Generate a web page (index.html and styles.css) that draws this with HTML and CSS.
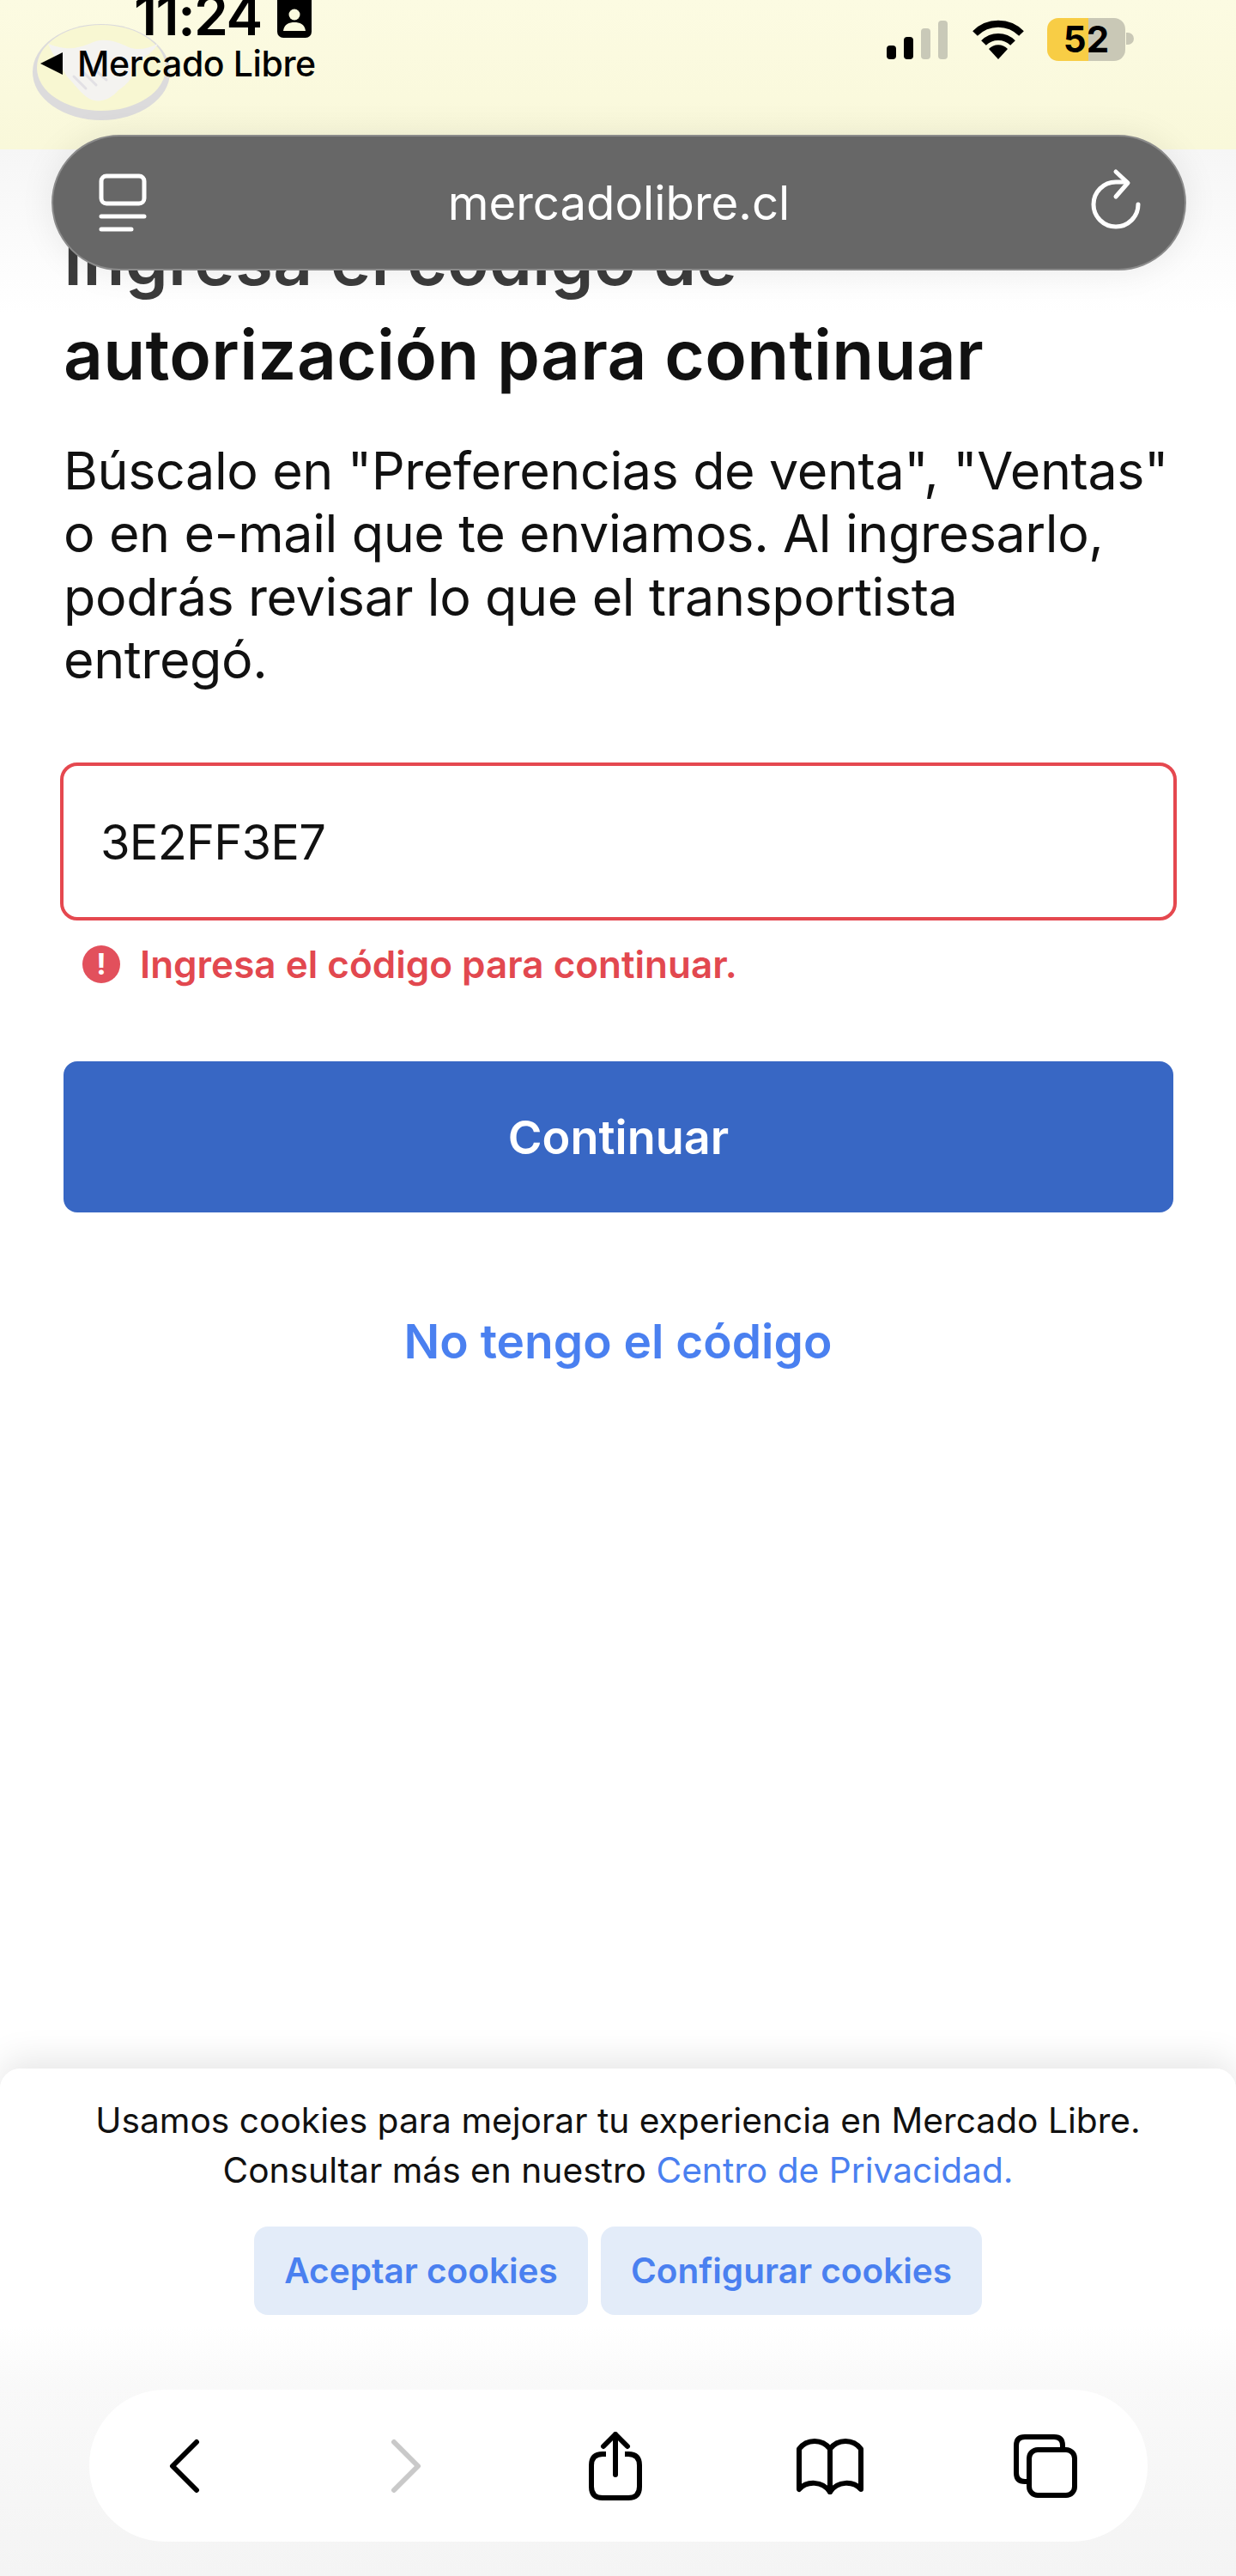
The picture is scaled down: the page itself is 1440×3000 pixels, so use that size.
FILE: index.html
```html
<!DOCTYPE html>
<html lang="es">
<head>
    <meta charset="UTF-8">
    <meta name="viewport" content="width=device-width, initial-scale=1.0">
    <title>Mercado Libre</title>
    <link rel="stylesheet" href="styles.css">
</head>
<body>

<div class="screen">

    <header class="top-band">
        <svg class="logo" width="160" height="113" viewBox="0 0 160 113">
            <ellipse cx="80" cy="57" rx="80" ry="56" fill="#dcdbdc"/>
            <ellipse cx="80" cy="52" rx="75" ry="50" fill="#f8f7d2"/>
            <path d="M18 24 C40 32 50 30 66 24 C80 16 96 20 112 28 C122 32 134 30 146 24 C138 38 124 42 120 48 C118 62 112 70 100 78 C92 88 78 94 66 88 C56 82 48 70 40 62 C34 52 24 38 18 24 Z" fill="#f4f3f0"/>
            <path d="M48 62 L62 76 M58 56 L74 72 M70 52 L86 66" stroke="#e2e0e4" stroke-width="3" stroke-linecap="round"/>
        </svg>
        <div class="status-left">
            <div class="clock">
                <span class="time">11:24</span>
                <svg width="40" height="44" viewBox="0 0 40 44">
                    <rect x="0" y="-8" width="40" height="52" rx="7" fill="#000"/>
                    <circle cx="20" cy="17" r="6.5" fill="#fbfadf"/>
                    <path d="M7 36 C8 28 14 26 20 26 C26 26 32 28 33 36 Z" fill="#fbfadf"/>
                </svg>
            </div>
            <div class="back-app">
                <span class="back-arrow"></span>
                <span>Mercado Libre</span>
            </div>
        </div>
        <div class="status-right">
            <div class="signal">
                <span class="bar bar-1"></span>
                <span class="bar bar-2"></span>
                <span class="bar bar-3 off"></span>
                <span class="bar bar-4 off"></span>
            </div>
            <svg class="wifi" width="62" height="46" viewBox="0 0 62 46">
                <path d="M4 16 A38 38 0 0 1 58 16" fill="none" stroke="#000" stroke-width="8"/>
                <path d="M14 27 A24 24 0 0 1 48 27" fill="none" stroke="#000" stroke-width="8"/>
                <path d="M20 34 A15 15 0 0 1 42 34 L31 46 Z" fill="#000"/>
            </svg>
            <div class="battery">
                <span class="battery-level">52</span>
            </div>
            <span class="battery-nub"></span>
        </div>
    </header>

    <div class="address-bar">
        <svg width="56" height="72" viewBox="0 0 56 72" fill="none" stroke="#fff" stroke-width="5" stroke-linecap="round">
            <rect x="3" y="5" width="50" height="32" rx="6"/>
            <path d="M3 52 H53 M3 67 H38"/>
        </svg>
        <span class="address-url">mercadolibre.cl</span>
        <svg width="58" height="70" viewBox="0 0 58 70" fill="none" stroke="#fff" stroke-width="5" stroke-linecap="round" stroke-linejoin="round">
            <path d="M55 37 A26 26 0 1 1 29 11 H41"/>
            <path d="M29 -1 L43 12 L29 28"/>
        </svg>
    </div>

    <main class="content">
        <h1 class="title"><span class="title-faded">Ingresa el código de</span><br>autorización para continuar</h1>
        <p class="lead">Búscalo en "Preferencias de venta", "Ventas"<br>o en e-mail que te enviamos. Al ingresarlo,<br>podrás revisar lo que el transportista<br>entregó.</p>

        <div class="code-input">3E2FF3E7</div>
        <div class="error-row">
            <span class="error-icon">!</span>
            <span>Ingresa el código para continuar.</span>
        </div>

        <button class="btn-primary">Continuar</button>
        <a class="link-secondary" href="#">No tengo el código</a>
    </main>

    <section class="cookie-card">
        <p class="cookie-text">Usamos cookies para mejorar tu experiencia en Mercado Libre.<br>Consultar más en nuestro <a href="#">Centro de Privacidad.</a></p>
        <div class="cookie-actions">
            <button class="btn-soft btn-accept">Aceptar cookies</button>
            <button class="btn-soft btn-config">Configurar cookies</button>
        </div>

        <nav class="toolbar">
            <div class="tool">
                <svg width="36" height="64" viewBox="0 0 36 64" fill="none" stroke="#000" stroke-width="6" stroke-linecap="round" stroke-linejoin="round">
                    <path d="M32 4 L4 32 L32 60"/>
                </svg>
            </div>
            <div class="tool tool-forward">
                <svg width="36" height="64" viewBox="0 0 36 64" fill="none" stroke="#c9c9c9" stroke-width="6" stroke-linecap="round" stroke-linejoin="round">
                    <path d="M4 4 L32 32 L4 60"/>
                </svg>
            </div>
            <div class="tool">
                <svg width="62" height="80" viewBox="0 0 62 80" fill="none" stroke="#000" stroke-width="6" stroke-linecap="round" stroke-linejoin="round">
                    <path d="M20 26 H16 Q3 26 3 39 V64 Q3 77 16 77 H46 Q59 77 59 64 V39 Q59 26 46 26 H42" stroke-linecap="butt"/>
                    <path d="M31 50 V3 M17 17 L31 3 L45 17"/>
                </svg>
            </div>
            <div class="tool">
                <svg width="78" height="66" viewBox="0 0 78 66" fill="none" stroke="#000" stroke-width="6" stroke-linecap="round" stroke-linejoin="round">
                    <path d="M3 60 V13 C12 1 30 1 39 13 C48 1 66 1 75 13 V60 C66 50 48 50 39 63 C30 50 12 50 3 60 Z"/>
                    <path d="M39 13 V63"/>
                </svg>
            </div>
            <div class="tool">
                <svg width="74" height="74" viewBox="0 0 74 74" fill="none" stroke="#000" stroke-width="6" stroke-linejoin="round">
                    <path d="M57 18 V13 Q57 3 47 3 H13 Q3 3 3 13 V45 Q3 55 13 55 H18"/>
                    <rect x="18" y="18" width="53" height="53" rx="10"/>
                </svg>
            </div>
        </nav>
    </section>

</div>

</body>
</html>
```

FILE: styles.css
```css
* {
    box-sizing: border-box;
}
html, body {
    margin: 0;
    padding: 0;
}
body {
    font-family: Inter, "Open Sans", sans-serif;
    background-color: #fff;
    color: #111;
}
.screen {
    position: relative;
    display: flex;
    flex-direction: column;
    height: 3000px;
    overflow: hidden;
}

/* status bar */
.top-band {
    position: relative;
    display: flex;
    justify-content: space-between;
    flex: 0 0 174px;
    background: linear-gradient(#fcfbe2, #f9f8da);
    color: #000;
}
.logo {
    position: absolute;
    left: 38px;
    top: 27px;
}
.status-left {
    position: relative;
    padding-left: 47px;
}
.clock {
    display: flex;
    align-items: flex-start;
    gap: 18px;
    padding-left: 109px;
    height: 44px;
}
.time {
    font-size: 64px;
    line-height: 64px;
    font-weight: 600;
    margin-top: -14px;
    letter-spacing: -1.5px;
}
.back-app {
    display: flex;
    align-items: center;
    gap: 17px;
    margin-top: 7px;
    font-size: 41px;
    line-height: 46px;
    font-weight: 500;
    letter-spacing: -0.4px;
}
.back-arrow {
    width: 0;
    height: 0;
    border-top: 13px solid transparent;
    border-bottom: 13px solid transparent;
    border-right: 26px solid #000;
}
.status-right {
    display: flex;
    align-items: flex-start;
    padding: 21px 119px 0 0;
}
.signal {
    display: flex;
    align-items: flex-end;
    gap: 9px;
    height: 48px;
    margin-right: 28px;
}
.bar {
    width: 11px;
    border-radius: 4px;
    background-color: #000;
}
.bar.off {
    background-color: #c9c9b8;
}
.bar-1 { height: 16px; }
.bar-2 { height: 26px; }
.bar-3 { height: 36px; }
.bar-4 { height: 45px; }
.wifi {
    margin: 2px 26px 0 0;
}
.battery {
    width: 91px;
    height: 50px;
    border-radius: 13px;
    background: linear-gradient(to right, #f8cd45 53%, #c9c8b6 53%);
}
.battery-level {
    display: block;
    text-align: center;
    font-size: 42px;
    line-height: 50px;
    font-weight: 700;
}
.battery-nub {
    width: 9px;
    height: 14px;
    margin: 17px 0 0 1px;
    border-radius: 0 7px 7px 0;
    background-color: #c9c8b6;
}

/* safari address bar, floats over the page */
.address-bar {
    position: absolute;
    left: 60px;
    top: 157px;
    z-index: 2;
    display: flex;
    align-items: center;
    justify-content: space-between;
    width: 1322px;
    height: 158px;
    padding: 0 51px 0 53px;
    border: 2px solid #8b8b8b;
    border-radius: 79px;
    background-color: #676767;
    box-shadow: 0 0 40px rgba(0, 0, 0, 0.08);
    color: #fff;
}
.address-bar svg {
    overflow: visible;
}
.address-url {
    font-size: 54.5px;
}

/* page */
.content {
    display: flex;
    flex-direction: column;
    flex: 1;
    padding: 74px 74px 0;
    background: linear-gradient(#f6f6f6, #fff 190px);
}
.title {
    margin: 0;
    font-size: 80px;
    line-height: 110px;
    font-weight: 600;
    letter-spacing: 0.3px;
    white-space: nowrap;
}
.title-faded {
    color: #3c3c3c;
}
.lead {
    margin: 44px 0 0;
    font-size: 61px;
    line-height: 73.3px;
    font-weight: 400;
    letter-spacing: -0.4px;
    white-space: nowrap;
}
.code-input {
    width: 1301px;
    height: 184px;
    margin: 83px 0 0 -4px;
    padding-left: 43px;
    border: 4px solid #e5484f;
    border-radius: 20px;
    font-size: 56px;
    letter-spacing: -0.8px;
    line-height: 178px;
}
.error-row {
    display: flex;
    align-items: center;
    gap: 23px;
    margin: 29px 0 0 22px;
    font-size: 44px;
    line-height: 44px;
    font-weight: 600;
    color: #e2484f;
}
.error-icon {
    flex: 0 0 44px;
    height: 44px;
    border-radius: 50%;
    background-color: #e2505c;
    color: #fff;
    font-size: 34px;
    font-weight: 700;
    text-align: center;
}
.btn-primary {
    width: 1293px;
    height: 176px;
    margin-top: 91px;
    border: 0;
    border-radius: 16px;
    background-color: #3867c4;
    color: #fff;
    font-family: inherit;
    font-size: 54px;
    font-weight: 600;
}
.link-secondary {
    margin-top: 117px;
    text-align: center;
    font-size: 55px;
    font-weight: 600;
    color: #4a80f0;
    text-decoration: none;
}

/* cookies + bottom toolbar */
.cookie-card {
    flex: 0 0 591px;
    padding-top: 32px;
    border-radius: 24px 24px 0 0;
    background: linear-gradient(#fff 300px, #f9f9f9 370px, #f4f4f4 100%);
    box-shadow: 0 -10px 40px rgba(0, 0, 0, 0.1);
}
.cookie-text {
    margin: 0;
    text-align: center;
    font-size: 40.7px;
    line-height: 58px;
}
.cookie-text a {
    color: #4a80f0;
    text-decoration: none;
}
.cookie-actions {
    display: flex;
    justify-content: center;
    gap: 15px;
    margin-top: 36px;
}
.btn-soft {
    height: 103px;
    border: 0;
    border-radius: 16px;
    background-color: #e3ecf9;
    color: #4a80f0;
    font-family: inherit;
    font-size: 40.5px;
    font-weight: 600;
}
.btn-accept {
    width: 389px;
}
.btn-config {
    width: 444px;
}
.toolbar {
    display: flex;
    align-items: center;
    justify-content: space-between;
    width: 1233px;
    height: 177px;
    margin: 87px 0 0 104px;
    padding: 0 89px 0 81px;
    border-radius: 88px;
    background-color: #fff;
}
.tool {
    display: flex;
    justify-content: center;
    width: 60px;
}
.tool svg {
    flex: none;
}
.tool-forward {
    padding-left: 14px;
}
```
